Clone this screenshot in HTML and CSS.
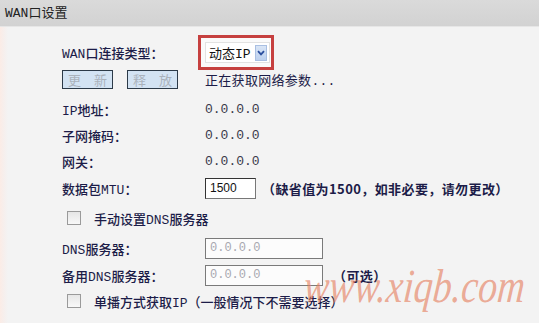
FILE: index.html
```html
<!DOCTYPE html>
<html lang="zh-CN">
<head>
    <meta charset="UTF-8">
    <title>WAN口设置</title>
    <link rel="stylesheet" href="styles.css">
</head>
<body>
    <div class="page">
        <div class="title-bar">WAN口设置</div>

        <div class="panel">
            <div class="row row-type">
                <span class="label">WAN口连接类型：</span>
                <div class="highlight">
                    <div class="select">
                        <span class="select-text">动态IP</span>
                        <span class="select-arrow">
                            <svg width="8" height="6" viewBox="0 0 8 6"><path d="M1 1.2 L4 4.4 L7 1.2" fill="none" stroke="#2b4f9e" stroke-width="1.8"/></svg>
                        </span>
                    </div>
                </div>
            </div>

            <div class="row row-buttons">
                <div class="label buttons">
                    <button class="btn" disabled>更 新</button>
                    <button class="btn" disabled>释 放</button>
                </div>
                <span class="status">正在获取网络参数...</span>
            </div>

            <div class="row row-first">
                <span class="label">IP地址：</span>
                <span class="value">0.0.0.0</span>
            </div>
            <div class="row">
                <span class="label">子网掩码：</span>
                <span class="value">0.0.0.0</span>
            </div>
            <div class="row">
                <span class="label">网关：</span>
                <span class="value">0.0.0.0</span>
            </div>
            <div class="row row-mtu">
                <span class="label">数据包MTU：</span>
                <input class="field field-mtu" type="text" value="1500">
                <span class="note">（缺省值为1500，如非必要，请勿更改）</span>
            </div>

            <div class="row row-check">
                <span class="checkbox"></span>
                <span class="check-text">手动设置DNS服务器</span>
            </div>
            <div class="row row-dns">
                <span class="label">DNS服务器：</span>
                <input class="field field-dns" type="text" value="0.0.0.0" disabled>
            </div>
            <div class="row">
                <span class="label">备用DNS服务器：</span>
                <input class="field field-dns" type="text" value="0.0.0.0" disabled>
                <span class="note note-optional">（可选）</span>
            </div>
            <div class="row">
                <span class="checkbox"></span>
                <span class="check-text">单播方式获取IP（一般情况下不需要选择）</span>
            </div>
        </div>

        <div class="watermark">www.xiqb.com</div>
    </div>
</body>
</html>
```

FILE: styles.css
```css
body {
    margin: 0;
    padding: 0;
    background-color: #f3f3f3;
    font-family: "Liberation Mono", "Noto Sans CJK SC", monospace;
    font-size: 13px;
    color: #1c1c48;
}

.page {
    position: relative;
    width: 539px;
    height: 323px;
    overflow: hidden;
    background: linear-gradient(to right, #fbece6 0, #f6efed 4px, #f3f3f3 8px);
}

.title-bar {
    height: 27px;
    line-height: 27px;
    padding-left: 5px;
    background: linear-gradient(#dadada, #d2d2d2);
    border-bottom: 1px solid #e6e6e6;
    box-sizing: border-box;
    color: #222;
    font-size: 13px;
}

.panel {
    padding-top: 8px;
}

.row {
    display: flex;
    align-items: center;
    height: 26px;
    white-space: nowrap;
}

.label {
    width: 143px;
    padding-left: 62px;
    flex-shrink: 0;
    font-weight: 500;
}

.row-type {
    height: 35px;
}

.highlight {
    margin-left: -7px;
    width: 76px;
    height: 35px;
    box-sizing: border-box;
    border: 3px solid #c6403f;
    background: #fafafa;
    display: flex;
    align-items: center;
    padding-left: 4px;
}

.select {
    display: flex;
    align-items: center;
    justify-content: space-between;
    width: 65px;
    height: 21px;
    box-sizing: border-box;
    padding: 2px 2px 2px 3px;
    background: #fff;
    border: 1px solid #e2e2e2;
}

.select-text {
    color: #111;
}

.select-arrow {
    display: flex;
    align-items: center;
    justify-content: center;
    width: 12px;
    height: 16px;
    background: linear-gradient(#d9e5f6, #bcd0ee);
    border: 1px solid #a9bfe2;
    box-sizing: border-box;
}

.row-buttons {
    height: 19px;
}

.buttons {
    display: flex;
    gap: 14px;
}

.btn {
    width: 51px;
    height: 19px;
    padding: 0 0 0 5px;
    margin: 0;
    font-family: "Noto Sans CJK SC", sans-serif;
    font-size: 13px;
    line-height: 15px;
    letter-spacing: 5px;
    color: #aab2bc;
    background: #d3e3f3;
    border: 1px solid #2c3a48;
}

.status {
    color: #1c1c48;
    letter-spacing: 0.3px;
}

.row-first {
    margin-top: 7px;
}

.value {
    color: #3a3a4a;
}

.row-mtu {
    height: 28px;
}

.field {
    height: 21px;
    box-sizing: border-box;
    padding: 0 4px;
    margin: 0;
    font-size: 12px;
    background: #fff;
}

.field-mtu {
    width: 51px;
    font-family: "Liberation Sans", sans-serif;
    color: #111;
    border: 1px solid #777;
    border-top-color: #333;
    border-left-color: #333;
}

.field-dns {
    width: 118px;
    font-family: "Liberation Mono", monospace;
    color: #a8a8b0;
    border: 1px solid #7a7a7a;
    background: #fcfcfc;
}

.note {
    margin-left: 6px;
    font-family: "Noto Sans CJK SC", sans-serif;
    font-weight: bold;
    font-size: 13px;
    letter-spacing: 0.4px;
    color: #1c1c48;
}

.note-optional {
    margin-left: 10px;
}

.row-check {
    height: 32px;
}

.row-dns {
    height: 28px;
}

.checkbox {
    width: 12px;
    height: 12px;
    margin-left: 67px;
    margin-right: 13px;
    border: 1px solid #9a9a9a;
    background: linear-gradient(#e6e6e6, #f8f8f8);
}

.check-text {
    font-weight: 500;
}

.watermark {
    position: absolute;
    left: 304px;
    top: 267px;
    font-family: "Liberation Serif", serif;
    font-style: italic;
    font-size: 38px;
    line-height: 38px;
    color: rgba(230, 128, 96, 0.65);
    transform: scaleY(1.25) skewX(-6deg);
}
```
